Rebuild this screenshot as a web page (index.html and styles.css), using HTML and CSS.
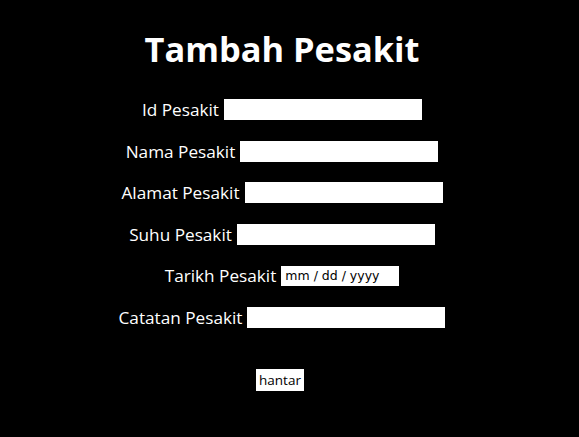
FILE: index.html
```html
<!DOCTYPE html>
<html>
<head>
<meta charset="utf-8">
<link rel="stylesheet" href="styles.css">
</head>
<body>
<h1 class="title">Tambah Pesakit</h1>
<form class="form">
  <div class="row"><label>Id Pesakit</label><input class="field" type="text"></div>
  <div class="row"><label>Nama Pesakit</label><input class="field" type="text"></div>
  <div class="row"><label>Alamat Pesakit</label><input class="field" type="text"></div>
  <div class="row"><label>Suhu Pesakit</label><input class="field" type="text"></div>
  <div class="row"><label>Tarikh Pesakit</label><input class="date" type="text" placeholder="mm / dd / yyyy"></div>
  <div class="row"><label>Catatan Pesakit</label><input class="field" type="text"></div>
  <div class="actions"><button class="submit" type="button">hantar</button></div>
</form>
</body>
</html>
```
FILE: styles.css
```css
html, body {
  margin: 0;
  padding: 0;
  background: #000;
}
body {
  width: 564px;
  color: #fff;
  font-family: "Open Sans", sans-serif;
  font-size: 17.2px;
}
.title {
  margin: 0;
  padding-top: 26px;
  font-size: 34.4px;
  font-weight: 700;
  text-align: center;
  line-height: 46px;
}
.form {
  display: flex;
  flex-direction: column;
  align-items: center;
  padding-top: 27px;
  gap: 20.5px;
}
.row {
  display: flex;
  align-items: center;
  justify-content: center;
  gap: 5px;
  height: 21px;
}
.row label {
  line-height: 21px;
}
.field {
  box-sizing: border-box;
  width: 198px;
  height: 21px;
  border: 0;
  padding: 0 2px;
  background: #fff;
  outline: none;
}
.date {
  box-sizing: border-box;
  width: 118px;
  height: 20px;
  border: 0;
  padding: 0 4px;
  background: #fff;
  color: #000;
  font-family: "DejaVu Sans", sans-serif;
  font-size: 12.5px;
}
.date::placeholder {
  color: #000;
  opacity: 1;
}
.actions {
  margin-top: 19px;
  margin-right: 4px;
}
.submit {
  box-sizing: border-box;
  width: 48px;
  height: 22px;
  border: 0;
  padding: 0;
  background: #fff;
  color: #000;
  font-family: "Open Sans", sans-serif;
  font-size: 13.5px;
}
```
